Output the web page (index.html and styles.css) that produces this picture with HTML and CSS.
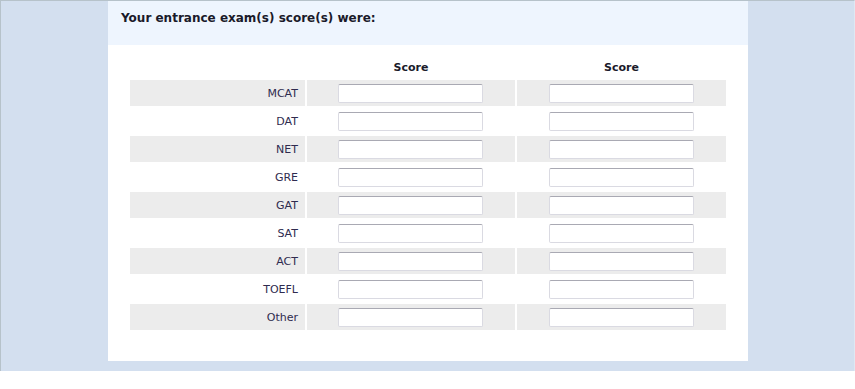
FILE: index.html
```html
<!DOCTYPE html>
<html>
<head>
<meta charset="utf-8">
<link rel="stylesheet" href="styles.css">
</head>
<body>
<div class="page">
  <div class="panel">
    <div class="panel-head">Your entrance exam(s) score(s) were:</div>
    <div class="panel-body">
      <table class="scores">
        <colgroup>
          <col class="c-label">
          <col class="c-one">
          <col class="c-two">
        </colgroup>
        <thead>
          <tr><th></th><th>Score</th><th>Score</th></tr>
        </thead>
        <tbody>
          <tr class="alt"><td class="label">MCAT</td><td class="f1"><input type="text"></td><td class="f2"><input type="text"></td></tr>
          <tr><td class="label">DAT</td><td class="f1"><input type="text"></td><td class="f2"><input type="text"></td></tr>
          <tr class="alt"><td class="label">NET</td><td class="f1"><input type="text"></td><td class="f2"><input type="text"></td></tr>
          <tr><td class="label">GRE</td><td class="f1"><input type="text"></td><td class="f2"><input type="text"></td></tr>
          <tr class="alt"><td class="label">GAT</td><td class="f1"><input type="text"></td><td class="f2"><input type="text"></td></tr>
          <tr><td class="label">SAT</td><td class="f1"><input type="text"></td><td class="f2"><input type="text"></td></tr>
          <tr class="alt"><td class="label">ACT</td><td class="f1"><input type="text"></td><td class="f2"><input type="text"></td></tr>
          <tr><td class="label">TOEFL</td><td class="f1"><input type="text"></td><td class="f2"><input type="text"></td></tr>
          <tr class="alt"><td class="label">Other</td><td class="f1"><input type="text"></td><td class="f2"><input type="text"></td></tr>
        </tbody>
      </table>
    </div>
  </div>
</div>
</body>
</html>
```
FILE: styles.css
```css
html, body {
  margin: 0;
  padding: 0;
  background: #ffffff;
}
body {
  font-family: "DejaVu Sans", Verdana, sans-serif;
  width: 855px;
  height: 389px;
  overflow: hidden;
}
.page {
  box-sizing: border-box;
  width: 855px;
  height: 371px;
  background: #d3dfef;
  border-top: 1px solid #b6c2ca;
  border-left: 1px solid #b6c2ca;
  border-right: 1px solid #dfe8f3;
  padding-left: 107px;
}
.panel {
  width: 640px;
  height: 360px;
  background: #ffffff;
}
.panel-head {
  box-sizing: border-box;
  height: 44px;
  background: #eef5fe;
  padding: 8px 0 0 13px;
  font-size: 12px;
  line-height: 18px;
  font-weight: bold;
  color: #1a1a2a;
}
.panel-body {
  padding: 9px 20px 0 20px;
}
.scores {
  border-collapse: separate;
  border-spacing: 2px;
  table-layout: fixed;
  width: 600px;
}
.c-label { width: 175px; }
.c-one { width: 208px; }
.c-two { width: 209px; }
.scores th {
  height: 22px;
  padding: 0;
  font-size: 11px;
  font-weight: bold;
  color: #1a1a2a;
  text-align: center;
  vertical-align: middle;
}
.scores td {
  height: 26px;
  padding: 0;
  text-align: left;
  vertical-align: middle;
}
.scores tr.alt td {
  background: #ececec;
}
.scores td.label {
  text-align: right;
  padding-right: 7px;
  font-size: 11px;
  color: #2f2b4f;
}
.scores input {
  box-sizing: border-box;
  display: block;
  margin: 1px 0 0 31px;
  width: 145px;
  height: 19px;
  padding: 0;
  background: #ffffff;
  border: 1px solid #dadae2;
  border-top-color: #a9a9b3;
  border-radius: 2px;
}
.scores td.f2 input {
  margin-left: 32px;
}
```
